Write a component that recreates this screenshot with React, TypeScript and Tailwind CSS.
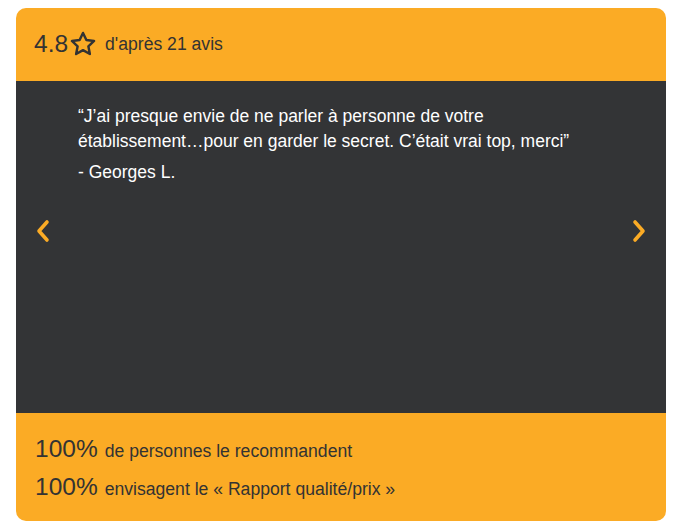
import React from "react";

const Star = () => (
  <svg width="28" height="28" viewBox="0 0 24 24" fill="none" stroke="#333333" strokeWidth="2.1" strokeLinejoin="round" strokeLinecap="round">
    <path d="M12 2.5l2.9 6.1 6.6.8-4.9 4.6 1.3 6.6L12 17.3l-5.9 3.3 1.3-6.6-4.9-4.6 6.6-.8z" />
  </svg>
);

const Chevron = ({ dir }: { dir: "left" | "right" }) => (
  <svg width="16" height="24" viewBox="0 0 16 24" fill="none" stroke="#fbab25" strokeWidth="3.6" strokeLinecap="round" strokeLinejoin="round">
    {dir === "left" ? <path d="M12 3L4 12l8 9" /> : <path d="M4 3l8 9-8 9" />}
  </svg>
);

export default function App() {
  return (
    <div className="w-[676px] h-[527px] bg-white pt-2 px-4" style={{ fontFamily: '"Liberation Sans", Arial, sans-serif' }}>
      <div className="w-[650px] h-[513px] rounded-[10px] overflow-hidden flex flex-col bg-[#fbab25]">
        <div className="h-[73px] flex items-center pl-[18px] text-[#333333]">
          <span className="text-[24.5px] leading-none">4.8</span>
          <span className="ml-[1px] -mt-[2px]"><Star /></span>
          <span className="ml-[8px] text-[17.6px] leading-none">d'après 21 avis</span>
        </div>
        <div className="relative h-[332px] bg-[#333436] px-[62px] pt-[23px] text-white">
          <p className="text-[17.5px] leading-[25px]">
            “J’ai presque envie de ne parler à personne de votre établissement…pour en garder le secret. C’était vrai top, merci”
          </p>
          <p className="text-[17.5px] leading-[25px] mt-[6px]">- Georges L.</p>
          <button className="absolute left-[19px] top-[138px] p-0">
            <Chevron dir="left" />
          </button>
          <button className="absolute right-[19px] top-[138px] p-0">
            <Chevron dir="right" />
          </button>
        </div>
        <div className="flex-1 flex flex-col pl-[19px] pt-[22px] gap-[8px] text-[#333333]">
          <div className="flex items-baseline leading-[28px]">
            <span className="text-[24.5px]">100%</span>
            <span className="ml-[7px] text-[17.6px]">de personnes le recommandent</span>
          </div>
          <div className="flex items-baseline leading-[28px]">
            <span className="text-[24.5px]">100%</span>
            <span className="ml-[7px] text-[17.6px]">envisagent le « Rapport qualité/prix »</span>
          </div>
        </div>
      </div>
    </div>
  );
}
